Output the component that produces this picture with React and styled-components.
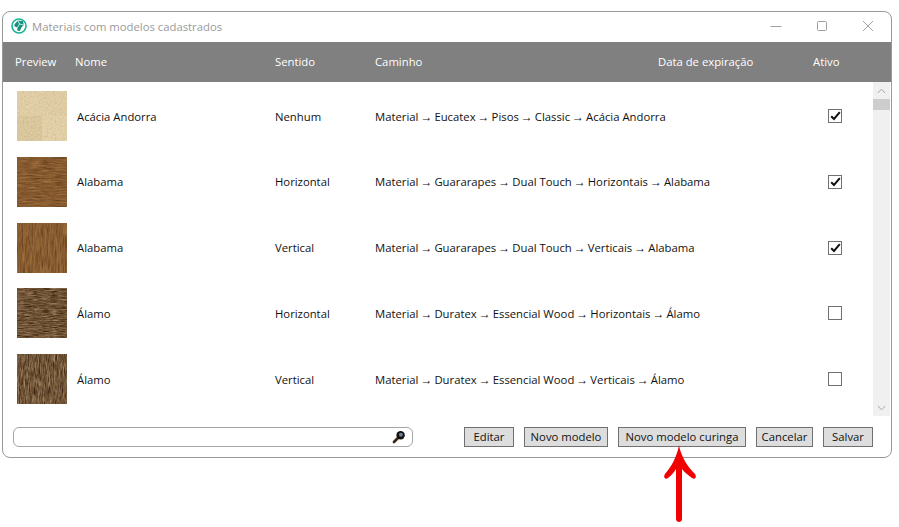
import styled, { createGlobalStyle } from "styled-components";

const rows = [
  { name: "Acácia Andorra", way: "Nenhum", path: ["Material", "Eucatex", "Pisos", "Classic", "Acácia Andorra"], on: true, wood: "acacia" },
  { name: "Alabama", way: "Horizontal", path: ["Material", "Guararapes", "Dual Touch", "Horizontais", "Alabama"], on: true, wood: "walnutH" },
  { name: "Alabama", way: "Vertical", path: ["Material", "Guararapes", "Dual Touch", "Verticais", "Alabama"], on: true, wood: "walnutV" },
  { name: "Álamo", way: "Horizontal", path: ["Material", "Duratex", "Essencial Wood", "Horizontais", "Álamo"], on: false, wood: "alamoH" },
  { name: "Álamo", way: "Vertical", path: ["Material", "Duratex", "Essencial Wood", "Verticais", "Álamo"], on: false, wood: "alamoV" },
];

const woods = {
  acacia: { base: "#dfcda6", dark: "0.7 0.56 0.34", light: "0.95 0.9 0.76", freq: "0.5 0.6", a: 0.7, b: -0.3 },
  walnutH: { base: "#85592e", dark: "0.36 0.21 0.09", light: "0.66 0.47 0.27", freq: "0.08 0.7", a: 1.7, b: -0.65 },
  walnutV: { base: "#875c30", dark: "0.36 0.21 0.09", light: "0.66 0.47 0.27", freq: "0.6 0.07", a: 1.7, b: -0.65 },
  alamoH: { base: "#6b4f30", dark: "0.22 0.13 0.06", light: "0.62 0.5 0.37", freq: "0.12 0.8", a: 2.3, b: -0.95 },
  alamoV: { base: "#6d5233", dark: "0.22 0.13 0.06", light: "0.64 0.52 0.39", freq: "0.8 0.12", a: 2.3, b: -0.95 },
};

function WoodThumb({ wood }) {
  const w = woods[wood];
  const [dr, dg, db] = w.dark.split(" ");
  const [lr, lg, lb] = w.light.split(" ");
  return (
    <Thumb viewBox="0 0 50 50">
      <filter id={`${wood}D`} x="0" y="0" width="100%" height="100%" colorInterpolationFilters="sRGB">
        <feTurbulence type="fractalNoise" baseFrequency={w.freq} numOctaves="3" seed="4" />
        <feColorMatrix values={`0 0 0 0 ${dr}  0 0 0 0 ${dg}  0 0 0 0 ${db}  ${w.a} 0 0 0 ${w.b}`} />
      </filter>
      <filter id={`${wood}L`} x="0" y="0" width="100%" height="100%" colorInterpolationFilters="sRGB">
        <feTurbulence type="fractalNoise" baseFrequency={w.freq} numOctaves="4" seed="11" />
        <feColorMatrix values={`0 0 0 0 ${lr}  0 0 0 0 ${lg}  0 0 0 0 ${lb}  0 ${w.a} 0 0 ${w.b}`} />
      </filter>
      <rect width="50" height="50" fill={w.base} />
      {wood === "acacia" && (
        <>
          <rect width="25" height="25" fill="#e0cfa8" />
          <rect x="25" y="25" width="25" height="25" fill="#e2d1aa" />
          <rect y="25" width="25" height="25" fill="#dac79e" />
        </>
      )}
      <rect width="50" height="50" filter={`url(#${wood}D)`} />
      <rect width="50" height="50" filter={`url(#${wood}L)`} />
    </Thumb>
  );
}

function Logo() {
  return (
    <svg width="16" height="16" viewBox="0 0 16 16">
      <circle cx="8" cy="8" r="7" fill="#fff" stroke="#1ab394" strokeWidth="1.6" />
      <path d="M3.4 6.5 7 2.6 12 3.2 12.8 7 10 10 9 13 6.2 12.6 6.5 9.5 3.6 8.5Z" fill="#12917a" />
      <path d="M7 2.6 8.5 6 12.8 7M8.5 6 6.5 9.5" fill="none" stroke="#fff" strokeWidth="0.8" />
    </svg>
  );
}

function SearchGlass() {
  return (
    <svg width="14" height="14" viewBox="0 0 14 14">
      <path d="M6.4 7.6 2 12" stroke="#3a2a12" strokeWidth="2.8" strokeLinecap="round" />
      <circle cx="8.6" cy="5.2" r="4.2" fill="#111" />
      <circle cx="8.9" cy="4.8" r="2" fill="#6f7f90" />
    </svg>
  );
}

export default function App() {
  return (
    <>
      <GlobalStyle />
      <Page>
        <Win>
          <TitleBar>
            <Logo />
            <Title>Materiais com modelos cadastrados</Title>
            <WinControls>
              <svg width="12" height="12" viewBox="0 0 12 12">
                <path d="M.5 6.5h11" stroke="#a0a0a0" />
              </svg>
              <svg width="12" height="12" viewBox="0 0 12 12">
                <rect x="1.5" y="1.5" width="9" height="9" rx="1" fill="none" stroke="#a0a0a0" />
              </svg>
              <svg width="12" height="12" viewBox="0 0 12 12">
                <path d="M1 1l10 10M11 1L1 11" stroke="#a0a0a0" />
              </svg>
            </WinControls>
          </TitleBar>

          <HeaderRow>
            <span>Preview</span>
            <span>Nome</span>
            <span>Sentido</span>
            <span>Caminho</span>
            <span>Data de expiração</span>
            <span>Ativo</span>
          </HeaderRow>

          <Body>
            <List>
              {rows.map((row, i) => (
                <Row key={i}>
                  <WoodThumb wood={row.wood} />
                  <span>{row.name}</span>
                  <span>{row.way}</span>
                  <span>
                    {row.path.map((part, j) => (
                      <span key={j}>
                        {j > 0 && <Sep>→</Sep>}
                        {part}
                      </span>
                    ))}
                  </span>
                  <span />
                  <Check>
                    {row.on && (
                      <svg width="11" height="10" viewBox="0 0 11 10">
                        <path d="M1.2 5.2 4 8 9.8 1.2" fill="none" stroke="#111" strokeWidth="2" />
                      </svg>
                    )}
                  </Check>
                </Row>
              ))}
            </List>
            <Scrollbar>
              <ScrollBtn>
                <svg width="9" height="6" viewBox="0 0 9 6">
                  <path d="M.8 5 4.5 1.2 8.2 5" fill="none" stroke="#a6a6a6" />
                </svg>
              </ScrollBtn>
              <ScrollThumb />
              <ScrollTrack />
              <ScrollBtn>
                <svg width="9" height="6" viewBox="0 0 9 6">
                  <path d="M.8 1 4.5 4.8 8.2 1" fill="none" stroke="#a6a6a6" />
                </svg>
              </ScrollBtn>
            </Scrollbar>
          </Body>

          <Footer>
            <SearchBox>
              <SearchGlass />
            </SearchBox>
            <Buttons>
              <Button $w={50}>Editar</Button>
              <Button $w={84}>Novo modelo</Button>
              <Button $w={128}>Novo modelo curinga</Button>
              <Button $w={57}>Cancelar</Button>
              <Button $w={50}>Salvar</Button>
            </Buttons>
          </Footer>
        </Win>

        <Arrow width="40" height="82" viewBox="0 0 40 82">
          <path
            d="M19 2C17 14 11 24 5 31C3 34 5 37 8 35C12 32 14 29 16 26L16 76C16 80 22 80 22 76L22 26C24 29 28 32 32 35C35 37 37 34 35 31C28 24 21 14 19 2Z"
            fill="#f00000"
          />
        </Arrow>
      </Page>
    </>
  );
}

const GlobalStyle = createGlobalStyle`
  html, body {
    margin: 0;
    padding: 0;
    background: #fff;
  }
  body {
    font-family: "Open Sans", "Noto Sans", "Liberation Sans", sans-serif;
    font-size: 11.3px;
    color: #111;
  }
`;

const Page = styled.div`
  position: relative;
  width: 899px;
  height: 527px;
  padding: 11px 0 0 2px;
  box-sizing: border-box;
  overflow: hidden;
`;

const Win = styled.div`
  width: 890px;
  height: 447px;
  box-sizing: border-box;
  border: 1px solid #999;
  border-radius: 8px;
  overflow: hidden;
  display: flex;
  flex-direction: column;
  background: #fff;
`;

const TitleBar = styled.div`
  height: 30px;
  box-sizing: border-box;
  flex: none;
  display: flex;
  align-items: center;
  gap: 5px;
  padding: 0 0 2px 8px;
`;

const Title = styled.span`
  color: #9a9a9a;
`;

const WinControls = styled.div`
  margin-left: auto;
  display: flex;
  align-items: center;
  gap: 34px;
  padding-right: 17px;
`;

const HeaderRow = styled.div`
  height: 40px;
  box-sizing: border-box;
  flex: none;
  background: #808080;
  color: #fff;
  display: grid;
  grid-template-columns: 60px 200px 100px 283px 155px 1fr;
  align-items: center;
  padding: 0 0 2px 12px;
`;

const Body = styled.div`
  display: flex;
  height: 334px;
  flex: none;
`;

const List = styled.div`
  flex: 1;
  padding-top: 1.2px;
  overflow: hidden;
`;

const Row = styled.div`
  height: 65.75px;
  display: grid;
  grid-template-columns: 60px 198px 100px 283px 170px 1fr;
  align-items: center;
  padding-left: 14px;
  white-space: nowrap;
`;

const Sep = styled.span`
  font-family: "Liberation Sans", sans-serif;
  font-size: 12px;
  margin: 0 2px;
`;

const Thumb = styled.svg`
  width: 50px;
  height: 50px;
  display: block;
`;

const Check = styled.div`
  width: 14px;
  height: 14px;
  box-sizing: border-box;
  border: 1px solid #707070;
  display: flex;
  align-items: center;
  justify-content: center;
`;

const Scrollbar = styled.div`
  width: 17px;
  flex: none;
  margin-right: 1px;
  display: flex;
  flex-direction: column;
  background: #f0f0f0;
`;

const ScrollBtn = styled.div`
  height: 17px;
  flex: none;
  display: flex;
  align-items: center;
  justify-content: center;
`;

const ScrollThumb = styled.div`
  height: 11px;
  flex: none;
  background: #cdcdcd;
`;

const ScrollTrack = styled.div`
  flex: 1;
`;

const Footer = styled.div`
  flex: 1;
  display: flex;
  align-items: flex-start;
  justify-content: space-between;
  padding: 11px 18px 0 10px;
`;

const SearchBox = styled.div`
  width: 400px;
  height: 20px;
  box-sizing: border-box;
  border: 1px solid #a6a6a6;
  border-radius: 6px;
  display: flex;
  align-items: center;
  justify-content: flex-end;
  padding-right: 6px;
`;

const Buttons = styled.div`
  display: flex;
  gap: 10px;
`;

const Button = styled.button`
  width: ${(p) => p.$w}px;
  height: 20px;
  box-sizing: border-box;
  padding: 0;
  border: 1px solid #707070;
  background: #dddddd;
  color: #111;
  font: inherit;
  line-height: 1;
`;

const Arrow = styled.svg`
  position: absolute;
  left: 660px;
  top: 443px;
`;
